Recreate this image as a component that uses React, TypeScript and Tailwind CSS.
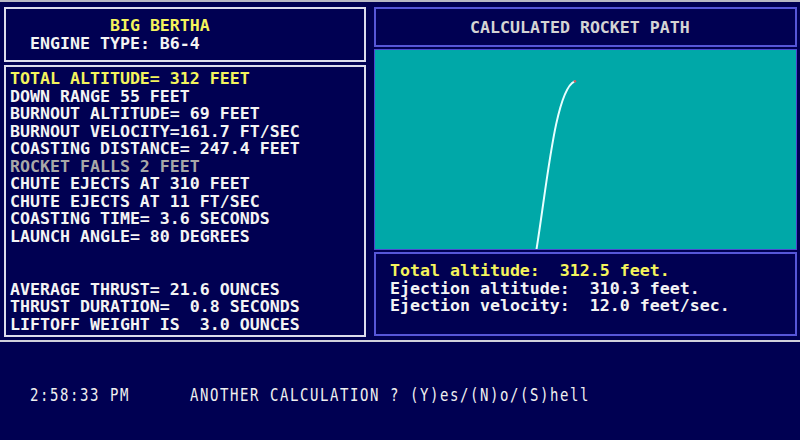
import React from "react";

const mono = { fontFamily: '"DejaVu Sans Mono", "Liberation Mono", monospace' };

const reportLines: { text: string; tone: "yellow" | "white" | "gray" }[] = [
  { text: "TOTAL ALTITUDE= 312 FEET", tone: "yellow" },
  { text: "DOWN RANGE 55 FEET", tone: "white" },
  { text: "BURNOUT ALTITUDE= 69 FEET", tone: "white" },
  { text: "BURNOUT VELOCITY=161.7 FT/SEC", tone: "white" },
  { text: "COASTING DISTANCE= 247.4 FEET", tone: "white" },
  { text: "ROCKET FALLS 2 FEET", tone: "gray" },
  { text: "CHUTE EJECTS AT 310 FEET", tone: "white" },
  { text: "CHUTE EJECTS AT 11 FT/SEC", tone: "white" },
  { text: "COASTING TIME= 3.6 SECONDS", tone: "white" },
  { text: "LAUNCH ANGLE= 80 DEGREES", tone: "white" },
  { text: " ", tone: "white" },
  { text: " ", tone: "white" },
  { text: "AVERAGE THRUST= 21.6 OUNCES", tone: "white" },
  { text: "THRUST DURATION=  0.8 SECONDS", tone: "white" },
  { text: "LIFTOFF WEIGHT IS  3.0 OUNCES", tone: "white" },
];

const toneClass = {
  yellow: "text-[#f4f45c]",
  white: "text-[#f4f4f4]",
  gray: "text-[#a8a8a8]",
};

function RocketPath() {
  return (
    <svg className="block w-full h-full" viewBox="0 0 420 197" preserveAspectRatio="none">
      <path
        d="M161 198 C172 130 180 40 199 31"
        fill="none"
        stroke="#e8ffff"
        strokeWidth="2"
        strokeLinecap="round"
      />
      <circle cx="199.5" cy="31" r="1.3" fill="#c86060" />
    </svg>
  );
}

export default function App() {
  return (
    <div
      className="w-[800px] h-[440px] bg-[#000052] flex flex-col overflow-hidden font-bold text-[16.6px] leading-[17.55px]"
      style={mono}
    >
      {/* top window edge */}
      <div className="h-[2px] bg-[#b8b8c4]" />

      <div className="flex gap-[8px] pl-[4px] pr-[3px] pt-[5px]">
        {/* left column: rocket name + report */}
        <div className="w-[362px] flex flex-col gap-[3px]">
          <div className="h-[55px] border-2 border-[#dcdcec] pl-[24px] pt-[8px] whitespace-pre">
            <div className="text-[#f4f45c]">{"        BIG BERTHA"}</div>
            <div className="text-[#f4f4f4]">ENGINE TYPE: B6-4</div>
          </div>
          <div className="h-[272px] border-2 border-[#dcdcec] pl-[4px] pt-[3px] whitespace-pre">
            {reportLines.map((l, i) => (
              <div key={i} className={toneClass[l.tone]}>
                {l.text}
              </div>
            ))}
          </div>
        </div>

        {/* right column: plot */}
        <div className="flex-1 flex flex-col">
          <div className="h-[40px] border-2 border-[#5656d8] pl-[94px] pt-[10px] text-[#d4d4d4] whitespace-pre">
            CALCULATED ROCKET PATH
          </div>
          <div className="mt-[2px] h-[201px] border border-[#4a4ad0] bg-[#00a8a8]">
            <RocketPath />
          </div>
          <div className="mt-[2px] h-[84px] border-2 border-[#5656d8] pl-[14px] pt-[8px] whitespace-pre">
            <div className="text-[#f4f45c]">Total altitude:  312.5 feet.</div>
            <div className="text-[#f4f4f4]">Ejection altitude:  310.3 feet.</div>
            <div className="text-[#f4f4f4]">Ejection velocity:  12.0 feet/sec.</div>
          </div>
        </div>
      </div>

      {/* divider above the prompt line */}
      <div className="mt-[3px] h-[2px] bg-[#d0d0dc]" />

      <div className="flex-1 flex items-center pl-[30px] pt-[9px]">
        <div className="flex scale-y-[1.3] font-normal text-[14px] tracking-[1.57px] text-[#f0f0f0] whitespace-pre">
          <span className="w-[160px]">2:58:33 PM</span>
          <span>ANOTHER CALCULATION ? (Y)es/(N)o/(S)hell</span>
        </div>
      </div>
    </div>
  );
}
